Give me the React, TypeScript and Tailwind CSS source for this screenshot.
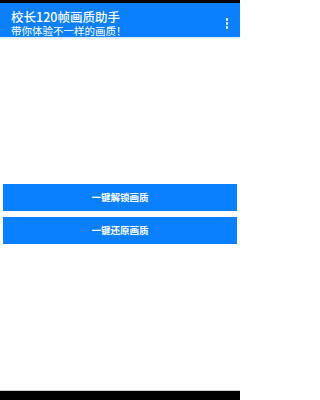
import React from "react";

export default function App() {
  return (
    <div
      className="w-[240px] h-[400px] flex flex-col bg-white overflow-hidden"
      style={{ fontFamily: '"Noto Sans CJK SC", "Noto Sans", sans-serif' }}
    >
      <div className="h-[3px] bg-black shrink-0" />
      <div className="h-[34px] bg-[#0a80fe] flex items-start pt-[7px] pl-[11px] pr-[12px] shrink-0 shadow-[0_1px_2px_rgba(10,128,254,0.25)]">
        <div className="flex-1 flex flex-col gap-[2px]">
          <div className="text-white text-[12.5px] leading-[13px] font-medium">校长120帧画质助手</div>
          <div className="text-white text-[10.5px] leading-[11px]">带你体验不一样的画质！</div>
        </div>
        <div className="flex flex-col gap-[1.5px] items-center pt-[8px]">
          <div className="w-[2.5px] h-[2.5px] bg-white rounded-full" />
          <div className="w-[2.5px] h-[2.5px] bg-white rounded-full" />
          <div className="w-[2.5px] h-[2.5px] bg-white rounded-full" />
        </div>
      </div>
      <div className="flex-1 flex flex-col pt-[147px] px-[3px] gap-[6px]">
        <div className="h-[27px] bg-[#0a80fe] flex items-center justify-center text-white text-[9.5px] font-bold">
          一键解锁画质
        </div>
        <div className="h-[27px] bg-[#0a80fe] flex items-center justify-center text-white text-[9.5px] font-bold">
          一键还原画质
        </div>
      </div>
      <div className="h-px bg-[#cfcfcf] shrink-0" />
      <div className="h-[9px] bg-black shrink-0" />
    </div>
  );
}
